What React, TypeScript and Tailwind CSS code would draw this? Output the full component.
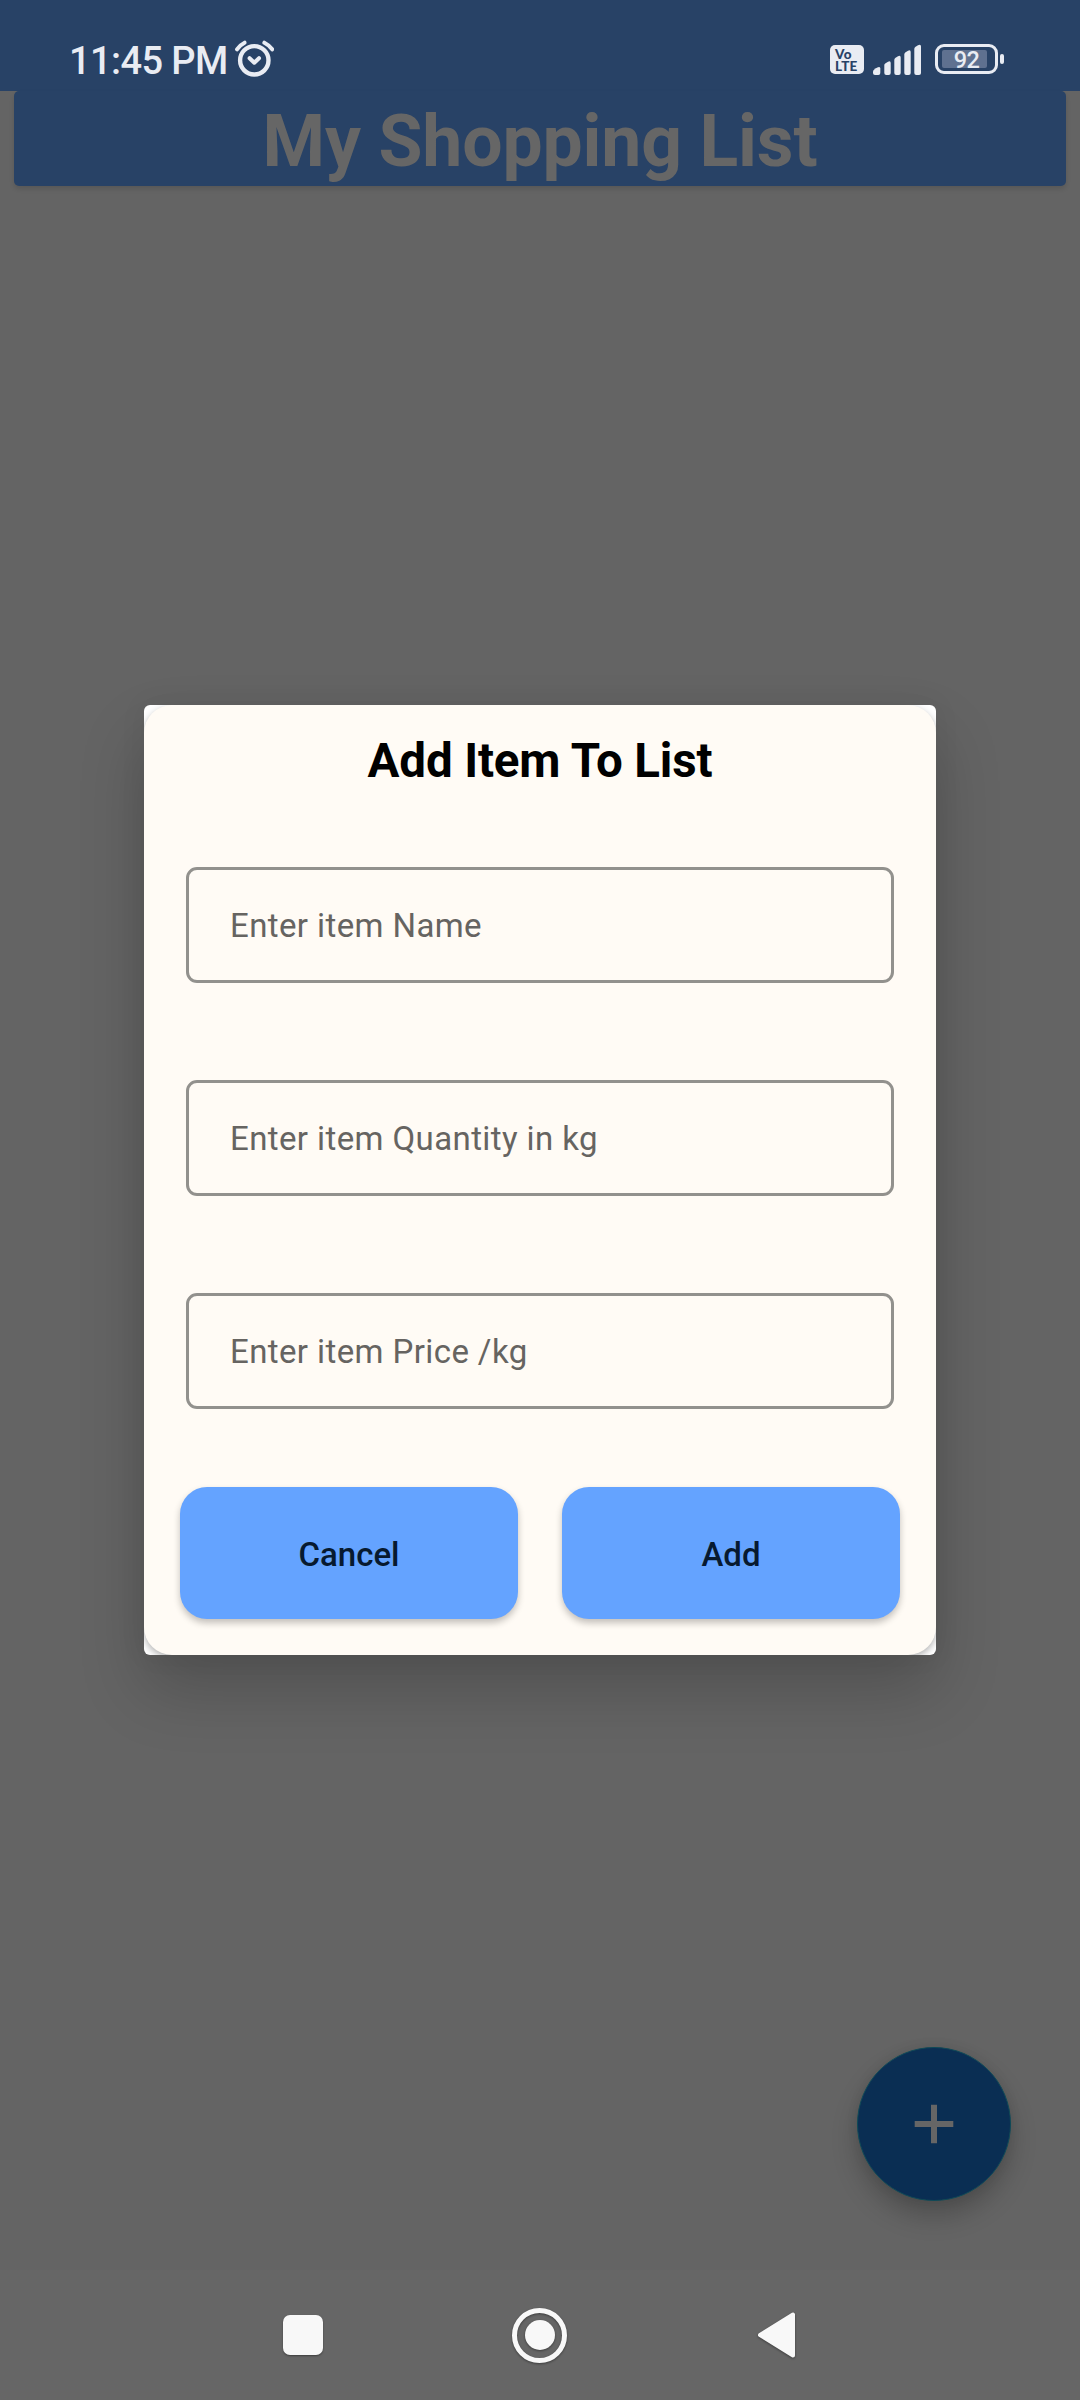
const hints = ['Enter item Name', 'Enter item Quantity in kg', 'Enter item Price /kg'];

function AlarmIcon() {
  return (
    <svg width="40" height="38" viewBox="234 39 40 38" fill="none" stroke="#e9ecf3" strokeLinecap="round" strokeLinejoin="round">
      <circle cx="254.3" cy="60.3" r="14.2" strokeWidth="4.4" />
      <path d="M237 49.3Q240 45 244.600 42.700" strokeWidth="4" />
      <path d="M264.400 42.700Q269 45 272.200 49.300" strokeWidth="4" />
      <path d="M249.600 58.200L254.300 62.700L259 58.200" strokeWidth="4" />
    </svg>
  );
}

function SignalIcon() {
  return (
    <svg width="49" height="32" viewBox="873 44 49 32" fill="#e9ecf3">
      <path d="M873 71.500Q873 69.500 878 67.300Q880.300 66.300 880.300 68.500V73Q880.300 75 878.300 75H875Q873 75 873 73Z" />
      <path d="M884.300 65Q884.300 63.700 888 61.700Q890.700 60.500 890.700 63V73Q890.700 75 888.700 75H886.300Q884.300 75 884.300 73Z" />
      <path d="M894.300 60Q894.300 58 898 56.200Q900.700 55 900.700 57.500V73Q900.700 75 898.700 75H896.300Q894.300 75 894.300 73Z" />
      <path d="M904.300 54.500Q904.300 52.500 908 50.700Q910.700 49.500 910.700 52V73Q910.700 75 908.700 75H906.300Q904.300 75 904.300 73Z" />
      <path d="M914.300 49Q914.300 47 918 45.200Q921 43.800 921 46.500V73Q921 75 919 75H916.300Q914.300 75 914.300 73Z" />
    </svg>
  );
}

function StatusBar() {
  return (
    <header className="flex h-[91px] shrink-0 items-start bg-[#284266] text-[#e9ecf3]">
      <div className="ml-[69px] mt-[39px] w-[165px] whitespace-nowrap text-[38px] leading-[45px] font-medium tracking-[-0.6px]">11:45 PM</div>
      <div className="mt-[39px]"><AlarmIcon /></div>
      <div className="ml-[556px] mt-[45px] flex h-[29px] w-[34px] flex-col items-start rounded-[5px] bg-[#e9ecf3] pt-[3px] pl-[5px] font-['Lato'] text-[13.500px] leading-[12px] font-black tracking-[0.3px] text-[#284266]">
        <span>Vo</span>
        <span>LTE</span>
      </div>
      <div className="ml-[9px] mt-[44px]"><SignalIcon /></div>
      <div className="ml-[13px] mt-[44px] flex h-[30px] w-[63px] items-center rounded-[9px] border-[3px] border-[#e9ecf3] pl-[4px]">
        <div className="flex h-[18px] w-[45px] items-center justify-center rounded-[2px] bg-[#5f7190] pt-[3px] pl-[4px] text-[23.500px] font-medium tracking-[-0.6px]">92</div>
      </div>
      <div className="ml-[2px] mt-[54px] h-[10px] w-[4px] rounded-[2px] bg-[#e9ecf3]" />
    </header>
  );
}

function AddButton() {
  return (
    <button className="absolute top-[2047px] left-[857px] flex size-[154px] items-center justify-center rounded-full border border-[#0f4a57] bg-[#0a2e53] shadow-[0_15px_26px_rgba(0,0,0,0.22),0_0_12px_rgba(0,0,0,0.08)]">
      <svg width="40" height="40" viewBox="0 0 40 40" stroke="#666" strokeWidth="6"><path d="M0.700 20H39.300M20 0.700V39.300" /></svg>
    </button>
  );
}

function Dialog() {
  return (
    <section className="absolute top-[705px] left-[144px] h-[950px] w-[792px] rounded-[6px] bg-white shadow-[0_34px_66px_rgba(0,0,0,0.2),0_0_28px_rgba(0,0,0,0.06)]">
      <div className="h-full overflow-hidden rounded-[6px]">
        <div className="flex h-full flex-col rounded-[28px] bg-[#fffbf5] px-9 shadow-[0_3px_7px_rgba(0,0,0,0.3)]">
          <h2 className="mt-[28px] text-center text-[47.500px] leading-[56px] font-bold tracking-[-0.15px] text-black">Add Item To List</h2>
          <div className="mx-1.5 mt-[78px] flex flex-col gap-[97px]">
            {hints.map((hint) => (
              <div key={hint} className="flex h-[116px] items-center rounded-[11px] border-3 border-[#92918d] pt-0.5 pl-[41px] text-[33px] tracking-[0.4px] text-[#666461]">{hint}</div>
            ))}
          </div>
          <div className="mt-[78px] flex justify-between">
            {['Cancel', 'Add'].map((label) => (
              <button key={label} className="h-[132px] w-[338px] rounded-[27px] bg-[#64a3ff] pt-1 text-[33px] font-medium text-[#071a30] shadow-[0_4px_7px_rgba(0,0,0,0.24)]">{label}</button>
            ))}
          </div>
        </div>
      </div>
    </section>
  );
}

function NavBar() {
  return (
    <nav className="flex h-[130px] shrink-0 items-center bg-[#666666] pl-[283px] text-[#f8f8f8]">
      <div className="size-10 rounded-[7px] bg-[#f8f8f8] shadow-[0_1px_2px_rgba(0,0,0,0.4)]" />
      <div className="ml-[189px] flex size-[55px] items-center justify-center rounded-full border-5 border-[#f8f8f8] drop-shadow-[0_1px_1px_rgba(0,0,0,0.4)]">
        <div className="size-[30px] rounded-full bg-[#f8f8f8]" />
      </div>
      <svg className="ml-[190px] drop-shadow-[0_1px_1px_rgba(0,0,0,0.4)]" width="39" height="48" viewBox="0 0 39 48" fill="currentColor" stroke="currentColor" strokeWidth="4" strokeLinejoin="round"><path d="M3 24L36 3.500V44.500Z" /></svg>
    </nav>
  );
}

export default function App() {
  return (
    <div className="relative flex h-[2400px] w-[1080px] flex-col overflow-hidden bg-[#646464] font-['Roboto',sans-serif]">
      <StatusBar />
      <main className="flex-1 px-3.5">
        <h1 className="h-[95px] rounded-[5px] bg-[#284266] text-center text-[71.500px] leading-[102px] font-bold tracking-[-0.15px] text-[#666666] shadow-[0_3px_5px_rgba(0,0,0,0.12)]">My Shopping List</h1>
      </main>
      <NavBar />
      <AddButton />
      <Dialog />
    </div>
  );
}
